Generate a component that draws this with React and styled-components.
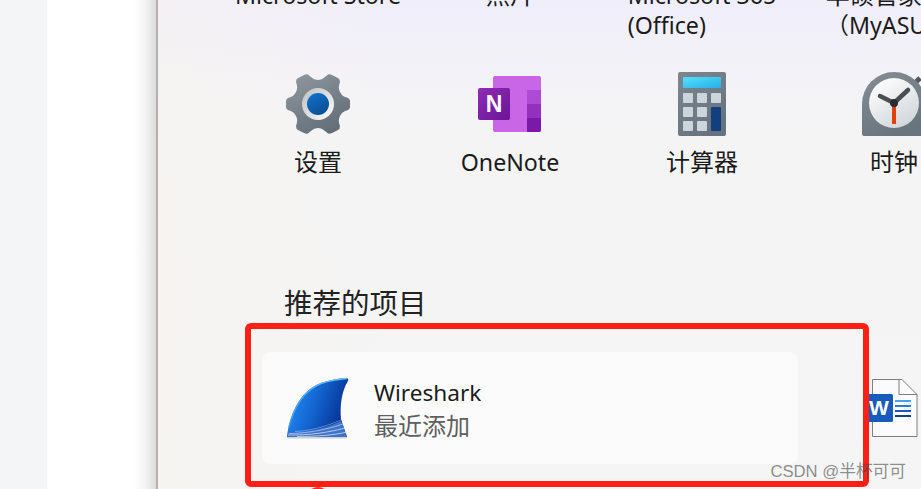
import React from 'react'
import styled, { createGlobalStyle } from 'styled-components'

const GlobalStyle = createGlobalStyle`
  html, body {
    margin: 0;
    padding: 0;
    height: 100%;
    overflow: hidden;
    font-family: "Noto Sans", "Noto Sans CJK SC", sans-serif;
  }
`

const Page = styled.div`
  display: flex;
  width: 100vw;
  height: 100vh;
  overflow: hidden;
  background: #f4f5f7;
`

const Gutter = styled.div`
  flex: 0 0 47px;
`

const Backdrop = styled.div`
  flex: 0 0 109px;
  background: linear-gradient(90deg, #ffffff 0, #ffffff 80%, #f4f4f4 90%, #dcdcdc 100%);
`

const Panel = styled.main`
  position: relative;
  flex: 1;
  min-width: 0;
  overflow: hidden;
  border-left: 2px solid #b2b2b2;
  color: #1b1b1b;
  background:
    linear-gradient(90deg, rgba(248, 243, 238, 0.5) 0, rgba(244, 244, 244, 0) 30%),
    linear-gradient(180deg, #f0eefb 0, #f1effa 25px, #f3f2f7 70px, #f4f4f5 120px, #f5f5f5 100%);
`

const AppGrid = styled.section`
  display: grid;
  grid-template-columns: repeat(4, 192px);
  margin: -20px 0 0 64px;
`

const AppTile = styled.div`
  display: flex;
  flex-direction: column;
  align-items: center;
  height: ${p => (p.$top ? '92px' : 'auto')};
`

const IconSlot = styled.div`
  display: flex;
  justify-content: center;
  align-items: center;
  width: 64px;
  height: 64px;
  margin-bottom: 11px;
`

const LabelBlock = styled.div`
  display: flex;
  flex-direction: column;
  align-items: flex-start;
  flex: none;
`

const AppLabel = styled.div`
  font-size: ${p => (p.$cjk ? '24px' : '23.2px')};
  line-height: 30px;
  white-space: nowrap;
`

const Heading = styled.h2`
  margin: 106px 0 29px 126px;
  font-size: 28.5px;
  font-weight: 400;
  line-height: 40px;
  color: #222;
`

const RecommendRow = styled.section`
  display: flex;
  align-items: center;
  margin-left: 104px;
`

const Card = styled.div`
  display: flex;
  align-items: center;
  flex: 0 0 536px;
  height: 112px;
  box-sizing: border-box;
  padding-left: 25px;
  gap: 25px;
  border-radius: 9px;
  background: #fbfbfb;
`

const CardText = styled.div`
  display: flex;
  flex-direction: column;
  padding-top: 4px;
`

const CardTitle = styled.div`
  font-size: 22.6px;
  line-height: 32px;
  color: #1b1b1b;
`

const CardSub = styled.div`
  font-size: 24px;
  line-height: 34px;
  color: #5f5f5f;
`

const DocIcon = styled.div`
  display: flex;
  margin-left: 71px;
`

const Highlight = styled.div`
  position: absolute;
  left: 87px;
  top: 323px;
  width: 624px;
  height: 164px;
  box-sizing: border-box;
  border: 6px solid #ff1f14;
  border-radius: 6px;
  pointer-events: none;
`

const RedMark = styled.div`
  position: absolute;
  left: 149px;
  top: 487px;
  width: 22px;
  height: 22px;
  border-radius: 50%;
  background: #ff2a1c;
`

const Watermark = styled.div`
  position: absolute;
  right: 15px;
  top: 461px;
  font-family: "Liberation Sans", "Noto Sans CJK SC", sans-serif;
  font-size: 16.7px;
  line-height: 22px;
  white-space: nowrap;
  color: rgba(70, 70, 70, 0.62);
`

const GearIcon = () => (
  <svg width="64" height="60" viewBox="0 0 64 60">
    <defs>
      <linearGradient id="gearBody" x1="0.2" y1="0" x2="0.8" y2="1">
        <stop offset="0" stopColor="#8e959c" />
        <stop offset="1" stopColor="#5f6b76" />
      </linearGradient>
      <linearGradient id="gearRing" x1="0" y1="0" x2="1" y2="1">
        <stop offset="0" stopColor="#b9bfc3" />
        <stop offset="1" stopColor="#ffffff" />
      </linearGradient>
      <linearGradient id="gearCore" x1="0.2" y1="0" x2="0.8" y2="1">
        <stop offset="0" stopColor="#0f70c8" />
        <stop offset="1" stopColor="#0d4c90" />
      </linearGradient>
    </defs>
    <path
      fill="url(#gearBody)"
      d="M18 1Q20 0 22 .5C25 3 28 6 32 6C36 6 39 3 42 .5Q44 0 46 1L52 4Q54 5 54 8C53 11 52 14 54 18C56 22 59 23 62 24Q64 25 64 27L64 33Q64 35 62 36C59 37 56 38 54 42C52 46 53 49 54 52Q54 55 52 56L46 59Q44 60 42 59.5C39 57 36 54 32 54C28 54 25 57 22 59.5Q20 60 18 59L12 56Q10 55 10 52C11 49 12 46 10 42C8 38 5 37 2 36Q0 35 0 33L0 27Q0 25 2 24C5 23 8 22 10 18C12 14 11 11 10 8Q10 5 12 4Z"
    />
    <circle cx="32" cy="30" r="16" fill="url(#gearRing)" />
    <circle cx="32" cy="30" r="11" fill="url(#gearCore)" />
  </svg>
)

const OneNoteIcon = () => (
  <svg width="64" height="56" viewBox="0 0 64 56">
    <defs>
      <linearGradient id="noteTile" x1="0" y1="0" x2="1" y2="1">
        <stop offset="0" stopColor="#8f2cb4" />
        <stop offset="1" stopColor="#6a1596" />
      </linearGradient>
    </defs>
    <rect x="15" y="0" width="48" height="56" rx="2" fill="#c966e8" />
    <rect x="49" y="14" width="14" height="14" fill="#ad4bd4" />
    <rect x="49" y="28" width="14" height="14" fill="#9530bd" />
    <path d="M49 42H63V54a2 2 0 0 1-2 2H49Z" fill="#7b1aa8" />
    <rect x="0" y="12" width="32" height="32" rx="2" fill="url(#noteTile)" />
    <text x="16" y="36" textAnchor="middle" fontFamily="Liberation Sans" fontWeight="700" fontSize="23" fill="#fff">N</text>
  </svg>
)

const CalcIcon = () => (
  <svg width="48" height="64" viewBox="0 0 48 64">
    <defs>
      <linearGradient id="calcBody" x1="0" y1="0" x2="0.6" y2="1">
        <stop offset="0" stopColor="#7c868f" />
        <stop offset="1" stopColor="#66737e" />
      </linearGradient>
      <linearGradient id="calcScreen" x1="0" y1="0" x2="1" y2="1">
        <stop offset="0" stopColor="#55e0ff" />
        <stop offset="1" stopColor="#24b0e6" />
      </linearGradient>
    </defs>
    <rect width="48" height="64" rx="2" fill="url(#calcBody)" />
    <rect x="5" y="5" width="38" height="11" rx="1" fill="url(#calcScreen)" />
    {[[5, 21], [19, 21], [33, 21], [5, 35], [19, 35], [5, 49], [19, 49]].map(([x, y]) => (
      <rect key={`${x}-${y}`} x={x} y={y} width="10" height="10" rx="1" fill="#ccd5dc" />
    ))}
    <rect x="33" y="35" width="10" height="24" rx="1" fill="#12407f" />
  </svg>
)

const ClockIcon = () => (
  <svg width="64" height="64" viewBox="0 0 64 64">
    <defs>
      <linearGradient id="clockFace" x1="0.2" y1="0" x2="0.8" y2="1">
        <stop offset="0" stopColor="#ffffff" />
        <stop offset="1" stopColor="#cfd4d8" />
      </linearGradient>
      <linearGradient id="clockBody" x1="0" y1="0" x2="0.5" y2="1">
        <stop offset="0" stopColor="#868e95" />
        <stop offset="1" stopColor="#68747e" />
      </linearGradient>
    </defs>
    <line x1="54" y1="10" x2="58" y2="6" stroke="#53585d" strokeWidth="5" />
    <path d="M0 32a32 32 0 0 1 64 0V62a2 2 0 0 1-2 2H2a2 2 0 0 1-2-2Z" fill="url(#clockBody)" />
    <circle cx="32" cy="31" r="25" fill="url(#clockFace)" />
    <line x1="32" y1="31" x2="32" y2="52" stroke="#e23f0a" strokeWidth="4" />
    <line x1="32" y1="31" x2="18" y2="24" stroke="#4a4e52" strokeWidth="4.5" strokeLinecap="round" />
    <line x1="32" y1="31" x2="46" y2="18" stroke="#4a4e52" strokeWidth="4.5" strokeLinecap="round" />
    <circle cx="32" cy="31" r="4" fill="#2a2d30" />
  </svg>
)

const SharkIcon = () => (
  <svg width="62" height="62" viewBox="0 0 62 62">
    <defs>
      <linearGradient id="sharkFin" x1="0" y1="0.35" x2="1" y2="0.7">
        <stop offset="0" stopColor="#2a8cf2" />
        <stop offset="0.4" stopColor="#1468d4" />
        <stop offset="0.85" stopColor="#08389c" />
        <stop offset="1" stopColor="#062f8e" />
      </linearGradient>
      <linearGradient id="sharkEdge" x1="0" y1="1" x2="1" y2="0">
        <stop offset="0" stopColor="#3f9bf5" />
        <stop offset="1" stopColor="#6cc0ff" />
      </linearGradient>
    </defs>
    <path fill="url(#sharkFin)" d="M0 60C2 40 12 14 34 6C43 3 52 1.5 59 1Q62 1 61 4C54 15 53 30 54 42L60 60Z" />
    <path fill="none" stroke="url(#sharkEdge)" strokeWidth="1.4" d="M2 50C6 34 15 14 34 6.5C43 3.5 52 2 60 1.5" />
    <path d="M1 56C18 56 38 52 54 44L60 60H0Z" fill="#3f74c8" />
    <g fill="none" stroke="#e3ecf9" strokeWidth="0.7">
      <path d="M8 54.5C24 54 40 49 54 43" opacity="0.55" />
      <path d="M2 56.5C20 56.5 42 52 56 47" opacity="0.8" />
      <path d="M1 58C22 58.5 44 55 58 51" />
      <path d="M10 59.5C30 59.5 48 58 60 55" />
    </g>
    <rect x="0" y="60" width="60" height="1.5" fill="#cdd1d6" />
  </svg>
)

const WordIcon = () => (
  <svg width="49" height="58" viewBox="0 0 49 58">
    <path d="M3.5 .5H33L48 15.5V57.5H3.5Z" fill="#fbfbfb" stroke="#7e7e7e" />
    <path d="M30 .5V15.5H48" fill="none" stroke="#7e7e7e" />
    <rect x="26" y="21" width="16" height="2" fill="#41a5ee" />
    <rect x="26" y="26" width="16" height="2" fill="#2b7cd3" />
    <rect x="26" y="31" width="16" height="2" fill="#185abd" />
    <rect x="26" y="36" width="16" height="2" fill="#103f91" />
    <rect x="-2" y="15" width="26" height="28" rx="1.5" fill="#185abd" />
    <text x="10" y="36" textAnchor="middle" fontFamily="Liberation Sans" fontWeight="700" fontSize="21" fill="#fff">W</text>
  </svg>
)

const apps = [
  { lines: [['Microsoft Store']], top: true },
  { lines: [['照片', true]], top: true },
  { lines: [['Microsoft 365'], ['(Office)']], top: true },
  { lines: [['华硕管家', true], ['（MyASUS）']], top: true },
  { lines: [['设置', true]], icon: <GearIcon /> },
  { lines: [['OneNote']], icon: <OneNoteIcon /> },
  { lines: [['计算器', true]], icon: <CalcIcon /> },
  { lines: [['时钟', true]], icon: <ClockIcon /> },
]

export default function App() {
  return (
    <>
      <GlobalStyle />
      <Page>
        <Gutter />
        <Backdrop />
        <Panel>
          <AppGrid>
            {apps.map(app => (
              <AppTile key={app.lines[0][0]} $top={app.top}>
                {app.icon && <IconSlot>{app.icon}</IconSlot>}
                <LabelBlock>
                  {app.lines.map(([text, cjk]) => (
                    <AppLabel key={text} $cjk={cjk}>{text}</AppLabel>
                  ))}
                </LabelBlock>
              </AppTile>
            ))}
          </AppGrid>
          <Heading>推荐的项目</Heading>
          <RecommendRow>
            <Card>
              <SharkIcon />
              <CardText>
                <CardTitle>Wireshark</CardTitle>
                <CardSub>最近添加</CardSub>
              </CardText>
            </Card>
            <DocIcon>
              <WordIcon />
            </DocIcon>
          </RecommendRow>
          <RedMark />
          <Highlight />
          <Watermark>CSDN @半杯可可</Watermark>
        </Panel>
      </Page>
    </>
  )
}
